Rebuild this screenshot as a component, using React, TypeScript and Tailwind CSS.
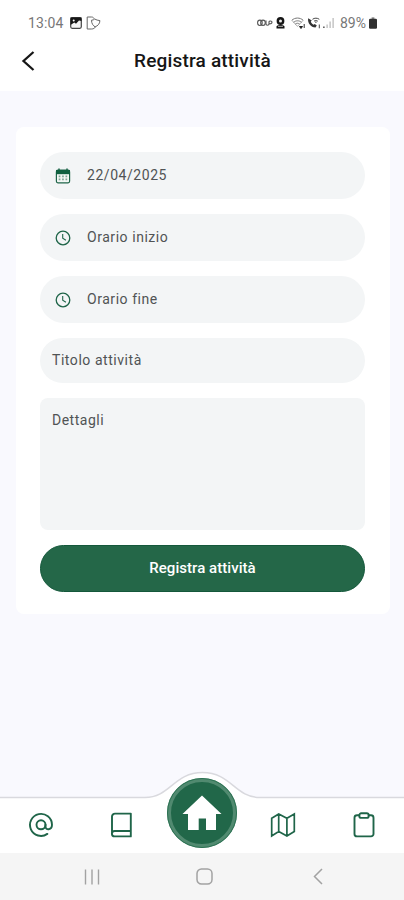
import type { ReactNode } from "react";

const GREEN = "#1f6549";

function PictureIcon() {
  return (
    <svg width="12" height="12" viewBox="0 0 12 12">
      <rect x="0.7" y="0.7" width="10.6" height="10.6" rx="1.500" fill="#f4f4f4" stroke="#444" strokeWidth="1.2" />
      <path d="M.5.5h11v3.500L9 3.500 6 6.800 4.300 5.400 .5 8z" fill="#161616" />
      <circle cx="3.7" cy="3.6" r="1" fill="#fff" />
    </svg>
  );
}

function ShieldPlayIcon() {
  return (
    <svg width="15" height="14" viewBox="0 0 15 14" fill="none" stroke="#666" strokeWidth="1">
      <path d="M8 2.600C7.500 1.500 6.800 1 5.500 1H1.200v12H5.500c2 0 3-.8 4-2" />
      <path d="M5.500 4.200c1.300 0 2.300-.4 3.200-1.200 1.300 1 3.300 1.300 5.200 1.600-.1 3.200-2 5.200-4.800 6.200-2-1-3.600-3.300-3.600-6.600z" />
    </svg>
  );
}

function VpnIcon() {
  return (
    <svg width="16" height="10" viewBox="0 0 16 10" fill="none" stroke="#555" strokeWidth="1.1">
      <ellipse cx="2.900" cy="4.800" rx="2.300" ry="2.700" />
      <ellipse cx="6" cy="4.800" rx="2.300" ry="2.700" />
      <path d="M9 2.500v3.300c0 2 3 2 3 0V4c0-1.500 3-1.300 3 0s-1 2-3 1.800" />
    </svg>
  );
}

function PersonBadgeIcon() {
  return (
    <svg width="9" height="12" viewBox="0 0 9 12">
      <circle cx="4.500" cy="4" r="3.900" fill="#151515" />
      <circle cx="4.500" cy="3.900" r="1.500" fill="#eee" />
      <path d="M.5 11.600V9.300c1-1.600 7-1.600 8 0v2.300z" fill="#151515" />
      <path d="M2 9.300h5" stroke="#ddd" strokeWidth=".8" />
    </svg>
  );
}

function WifiIcon() {
  return (
    <svg width="15" height="12" viewBox="0 0 15 12" fill="none" stroke="#777" strokeWidth="1">
      <path d="M.8 3.300C4 .3 9 .3 12.200 3.300M2.600 5.300c2.300-2 5.600-2 7.900 0M4.300 7.100c1.300-1.100 3-1.100 4.300 0" />
      <path d="M1 3.400l5.500 6 5.500-6" strokeWidth=".6" />
      <path d="M13.200 7v4" stroke="#333" />
      <path d="M8.500 9.500h3L10 11.500z" fill="#222" stroke="#222" />
    </svg>
  );
}

function WifiCallIcon() {
  return (
    <svg width="14" height="12" viewBox="0 0 14 12" fill="none" stroke="#444" strokeWidth="1">
      <path d="M1.200 1.300c-1 4.500 2.700 9.200 7.300 9.200l1.300-2-2-1.500-1.300.8C5 7 4.200 5.900 3.800 4.600l1-1.200z" fill="#333" stroke="none" />
      <path d="M5.500 2.300c2-1.500 4.800-1.500 6.800 0M7 4.200c1.100-.8 2.700-.8 3.800 0M8.900 4.500v1.500" />
      <path d="M12.300 7.500v3.800" />
    </svg>
  );
}

function SignalIcon() {
  return (
    <svg width="13" height="12" viewBox="0 0 13 12">
      <path d="M1 9.500h1.700V11H1z" fill="#666" />
      <path d="M4.300 7.500h1.700V11H4.300zM7.300 4.500H9V11H7.300zM10.300 1H12v10h-1.700z" fill="#ccc" />
    </svg>
  );
}

function BatteryIcon() {
  return (
    <svg width="8" height="12" viewBox="0 0 8 12">
      <path d="M2.600.4h2.800v1.500H2.600z" fill="#777" />
      <rect x="0" y="1.700" width="8" height="10" rx="1.200" fill="#303030" />
    </svg>
  );
}

function CalendarIcon() {
  return (
    <svg width="16" height="16" viewBox="0 0 16 16">
      <path d="M4 .5v3M12 .5v3" stroke={GREEN} strokeWidth="1.500" />
      <rect x="1.400" y="2.200" width="13.200" height="12.600" rx="1.500" fill="#f3f7f5" stroke={GREEN} strokeWidth="1.200" />
      <path d="M1 2h14v4.200H1z" fill="#0f6040" />
      <path d="M3.700 8.400h8.600M3.700 11.400h8.600" stroke={GREEN} strokeWidth="1.600" strokeDasharray="1.700 1.700" opacity=".55" />
    </svg>
  );
}

function ClockIcon() {
  return (
    <svg width="16" height="16" viewBox="0 0 16 16" fill="none" stroke={GREEN} strokeWidth="1.300">
      <circle cx="8" cy="8" r="6.800" />
      <path d="M7.700 4v4.200l3.200 2" strokeWidth="1.100" />
    </svg>
  );
}

function Stroke({ children }: { children: ReactNode }) {
  return (
    <svg className="ml-px" width="26" height="26" viewBox="0 0 26 26" fill="none" stroke={GREEN} strokeWidth="1.900" strokeLinejoin="round" strokeLinecap="round">
      {children}
    </svg>
  );
}

function PickerField({ icon, label }: { icon: ReactNode; label: string }) {
  return (
    <div className="flex h-[47px] items-center rounded-full bg-[#f3f5f6] pl-[15px]">
      <span>{icon}</span>
      <span className="-mt-[2px] ml-4 text-sm tracking-[0.55px] text-[#505354]">{label}</span>
    </div>
  );
}

export default function App() {
  return (
    <div className="flex h-[900px] w-[404px] flex-col overflow-hidden bg-[#f9f9fe] font-['Roboto','Noto_Sans',sans-serif]">
      <div className="flex h-[91px] flex-col bg-white">
        <div className="flex h-[46px] items-center justify-between pl-7 pr-[26px]">
          <div className="flex items-center">
            <span className="w-[42px] text-sm tracking-[0.15px] text-[#777]">13:04</span>
            <PictureIcon />
            <span className="ml-[4px]"><ShieldPlayIcon /></span>
          </div>
          <div className="flex items-center">
            <VpnIcon />
            <span className="ml-[3px]"><PersonBadgeIcon /></span>
            <span className="ml-[6px]"><WifiIcon /></span>
            <span className="ml-px"><WifiCallIcon /></span>
            <span className="ml-[1px]"><SignalIcon /></span>
            <span className="ml-[5px] w-[28px] text-sm text-[#777]">89%</span>
            <span className="ml-px mr-px"><BatteryIcon /></span>
          </div>
        </div>
        <div className="grid h-[30px] grid-cols-[60px_1fr_60px] items-center">
          <svg className="ml-[21px]" width="14" height="22" viewBox="0 0 14 22" fill="none" stroke="#171717" strokeWidth="2.300">
            <path d="M12.500 2L2.500 11l10 9" />
          </svg>
          <h1 className="pl-px pt-px text-center text-[19px] font-medium tracking-[0.18px] text-[#161616]">Registra attività</h1>
        </div>
      </div>

      <main className="flex-1 pt-9">
        <form className="ml-4 flex h-[487px] w-[374px] flex-col rounded-lg bg-white px-6 pt-[25px]">
          <div className="flex w-[325px] flex-col gap-[15px]">
            <PickerField icon={<CalendarIcon />} label="22/04/2025" />
            <PickerField icon={<ClockIcon />} label="Orario inizio" />
            <PickerField icon={<ClockIcon />} label="Orario fine" />
            <div className="flex h-[45px] items-center rounded-full bg-[#f3f5f6] pb-px pl-3 text-sm tracking-[0.55px] text-[#505354]">Titolo attività</div>
            <div className="h-[132px] rounded-lg bg-[#f3f5f6] pl-3 pt-3 text-sm tracking-[0.5px] text-[#505354]">Dettagli</div>
            <button type="button" className="h-[47px] rounded-full border border-[#14583b] bg-[#246748] text-[15px] font-medium tracking-[0.05px] text-white">Registra attività</button>
          </div>
        </form>
      </main>

      <nav className="relative h-14 bg-white">
        <svg className="absolute bottom-0 left-0" width="404" height="84" viewBox="0 0 404 84">
          <path d="M0 28.500H145C170 28.500 174 3.500 202.500 3.500S235 28.500 260 28.500H404V84H0z" fill="#fff" />
          <path d="M0 28.500H145C170 28.500 174 3.500 202.500 3.500S235 28.500 260 28.500H404" fill="none" stroke="#d9d9de" strokeWidth="1.500" />
        </svg>
        <div className="relative grid h-full grid-cols-5 items-center justify-items-center">
          <Stroke>
            <circle cx="13" cy="12.800" r="4.500" />
            <path d="M17.500 12.800v1.700c0 4.200 6.500 3.600 6.500-1.700a11 11 0 1 0-4.700 9.100" />
          </Stroke>
          <Stroke>
            <path d="M21.800 19H5.600a2.700 2.700 0 0 0 0 5.400h16.200V1.600H6a3 3 0 0 0-3 3v17" />
          </Stroke>
          <div className="-mt-[24px] ml-px flex size-[70px] items-center justify-center rounded-full border-4 border-[#518a70] bg-[#216749] outline outline-1 -outline-offset-1 outline-[#2c7253]">
            <svg width="40" height="36" viewBox="0 0 40 36">
              <path d="M20 .5L39.500 19H34V35H24V23.500h-7.300V35H6V19H.5z" fill="#fff" />
            </svg>
          </div>
          <Stroke>
            <g strokeWidth="1.700" strokeLinejoin="miter">
              <path d="M1.700 6.200L8.700 2l8.200 4.200L24.300 2v17.500L16.900 24l-8.200-4.500-7 4.500zM8.700 2v17.500M16.900 6.200V24" />
            </g>
          </Stroke>
          <Stroke>
            <path d="M8.300 3.300H6a2.500 2.500 0 0 0-2.500 2.500v16.100A2.500 2.500 0 0 0 6 24.400h14a2.500 2.500 0 0 0 2.500-2.500V5.800A2.500 2.500 0 0 0 20 3.300h-2.300" />
            <rect x="8.300" y="1.300" width="9.400" height="4.600" rx="2" />
          </Stroke>
        </div>
      </nav>

      <div className="flex h-[47px] items-center bg-[#f5f5f5] pl-[84px]">
        <svg width="16" height="16" viewBox="0 0 16 16" stroke="#a2a2a2" strokeWidth="1.400">
          <path d="M1.500.5v15M8 .5v15M14.500.5v15" />
        </svg>
        <svg className="ml-24" width="17" height="17" viewBox="0 0 17 17" fill="none" stroke="#a2a2a2" strokeWidth="1.500">
          <rect x="1" y="1" width="15" height="15" rx="4.500" />
        </svg>
        <svg className="ml-[100px]" width="10" height="17" viewBox="0 0 10 17" fill="none" stroke="#a2a2a2" strokeWidth="1.500">
          <path d="M9 1L1.500 8.500 9 16" />
        </svg>
      </div>
    </div>
  );
}
